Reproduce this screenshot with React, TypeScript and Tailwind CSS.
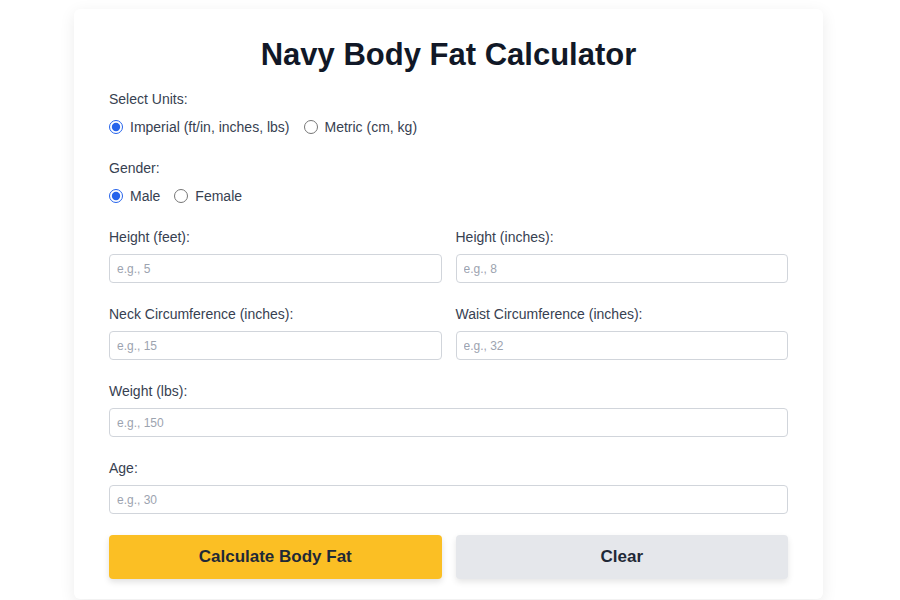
import React from "react";

function Field({ label, placeholder }: { label: string; placeholder: string }) {
  return (
    <div className="flex flex-col">
      <label className="text-[14px] leading-[20px] text-[#374151]">{label}</label>
      <input
        type="text"
        placeholder={placeholder}
        className="mt-[7px] h-[29px] w-full rounded-[4px] border border-[#d1d5db] bg-white px-[7px] text-[12px] text-[#374151] placeholder:text-[#9ca3af] outline-none"
      />
    </div>
  );
}

export default function App() {
  return (
    <div className="min-h-[600px] bg-white font-['Liberation_Sans',Arial,sans-serif]">
      <div className="ml-[74px] mt-[9px] w-[749px] rounded-[6px] bg-white px-[35px] pt-[26px] pb-[20px] shadow-[0_4px_16px_rgba(0,0,0,0.08)]">
        <h1 className="text-center text-[31px] font-bold leading-[40px] text-[#111827]">
          Navy Body Fat Calculator
        </h1>

        <div className="mt-[14px]">
          <div className="text-[14px] leading-[20px] text-[#374151]">Select Units:</div>
          <div className="mt-[8px] flex items-center gap-[14px] text-[14px] leading-[20px] text-[#374151]">
            <label className="flex items-center gap-[7px]">
              <input type="radio" name="units" defaultChecked className="m-0 h-[14px] w-[14px] accent-[#2563eb]" />
              Imperial (ft/in, inches, lbs)
            </label>
            <label className="flex items-center gap-[7px]">
              <input type="radio" name="units" className="m-0 h-[14px] w-[14px] accent-[#2563eb]" />
              Metric (cm, kg)
            </label>
          </div>
        </div>

        <div className="mt-[21px]">
          <div className="text-[14px] leading-[20px] text-[#374151]">Gender:</div>
          <div className="mt-[8px] flex items-center gap-[14px] text-[14px] leading-[20px] text-[#374151]">
            <label className="flex items-center gap-[7px]">
              <input type="radio" name="gender" defaultChecked className="m-0 h-[14px] w-[14px] accent-[#2563eb]" />
              Male
            </label>
            <label className="flex items-center gap-[7px]">
              <input type="radio" name="gender" className="m-0 h-[14px] w-[14px] accent-[#2563eb]" />
              Female
            </label>
          </div>
        </div>

        <div className="mt-[21px] grid grid-cols-2 gap-x-[14px] gap-y-[21px]">
          <Field label="Height (feet):" placeholder="e.g., 5" />
          <Field label="Height (inches):" placeholder="e.g., 8" />
          <Field label="Neck Circumference (inches):" placeholder="e.g., 15" />
          <Field label="Waist Circumference (inches):" placeholder="e.g., 32" />
          <div className="col-span-2">
            <Field label="Weight (lbs):" placeholder="e.g., 150" />
          </div>
          <div className="col-span-2">
            <Field label="Age:" placeholder="e.g., 30" />
          </div>
        </div>

        <div className="mt-[21px] grid grid-cols-2 gap-x-[14px]">
          <button className="h-[44px] rounded-[4px] bg-[#fbbf24] text-[17px] font-bold text-[#1f2937] shadow-[0_3px_6px_rgba(0,0,0,0.12)]">
            Calculate Body Fat
          </button>
          <button className="h-[44px] rounded-[4px] bg-[#e5e7eb] text-[17px] font-bold text-[#1f2937] shadow-[0_3px_6px_rgba(0,0,0,0.1)]">
            Clear
          </button>
        </div>
      </div>
    </div>
  );
}
